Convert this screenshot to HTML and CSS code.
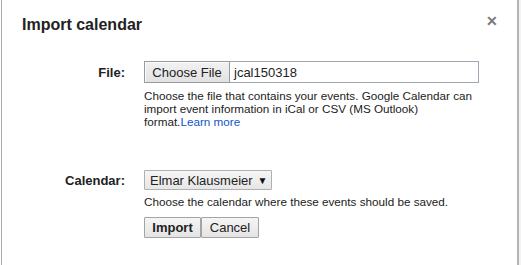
FILE: index.html
```html
<!DOCTYPE html>
<html>
<head>
<meta charset="utf-8">
<link rel="stylesheet" href="styles.css">
</head>
<body>
<div class="page">
  <div class="dialog">
    <div class="header">
      <h1 class="title">Import calendar</h1>
      <span class="close">&#x2715;</span>
    </div>
    <div class="form">
      <div class="label file-label">File:</div>
      <div class="field">
        <div class="file-input">
          <span class="choose">Choose File</span>
          <span class="filename">jcal150318</span>
        </div>
        <p class="help">Choose the file that contains your events. Google Calendar can import event information in iCal or CSV (MS Outlook) <span class="nowrap">format.<a class="link" href="#">Learn more</a></span></p>
      </div>
      <div class="label cal-label">Calendar:</div>
      <div class="field cal-field">
        <div class="select">Elmar Klausmeier <span class="arrow">&#x25BC;</span></div>
        <p class="help help2">Choose the calendar where these events should be saved.</p>
        <div class="buttons">
          <span class="btn btn-primary">Import</span>
          <span class="btn btn-cancel">Cancel</span>
        </div>
      </div>
    </div>
  </div>
  <div class="backdrop"></div>
</div>
</body>
</html>
```

FILE: styles.css
```css
* { box-sizing: border-box; }
html, body { margin: 0; padding: 0; }
body {
  width: 521px;
  height: 265px;
  overflow: hidden;
  font-family: "Liberation Sans", Arial, sans-serif;
  color: #222;
  background: #fff;
}
.page {
  display: flex;
  height: 265px;
}
.dialog {
  width: 518px;
  margin-left: 1px;
  border-left: 1px solid #a8a8a8;
  border-right: 2px solid #b4b4b4;
  background: #fff;
  height: 265px;
}
.backdrop {
  flex: 1;
  background: #f3f3f3;
}
.header {
  display: flex;
  justify-content: space-between;
  align-items: flex-start;
  padding: 15px 19px 0 20px;
  height: 61px;
}
.title {
  margin: 0;
  font-size: 16px;
  line-height: 20px;
  font-weight: bold;
  color: #222;
}
.close {
  font-size: 14px;
  font-weight: bold;
  color: #7a7a7a;
  line-height: 14px;
  margin-top: -1px;
}
.form {
  display: grid;
  grid-template-columns: 123px 1fr;
  column-gap: 19px;
}
.label {
  text-align: right;
  font-size: 13px;
  font-weight: bold;
  color: #222;
  white-space: nowrap;
}
.file-label { padding-top: 4px; }
.cal-label { padding-top: 45px; }
.file-input {
  display: flex;
  width: 335px;
  height: 22px;
  border: 1px solid #9ea8b2;
  background: #fff;
  white-space: nowrap;
}
.choose {
  display: flex;
  align-items: center;
  justify-content: center;
  font-size: 13px;
  color: #222;
  background: linear-gradient(#f2f2f2, #e2e2e2);
  box-shadow: inset 1px 1px 0 #fafafa;
  width: 86px;
  flex: none;
  margin: -1px 0 -1px -1px;
  border: 1px solid #9a9a9a;
}
.filename {
  display: flex;
  align-items: center;
  padding-left: 4px;
  font-size: 13px;
  color: #222;
}
.help {
  margin: 6px 0 0;
  font-size: 11.7px;
  line-height: 13px;
  color: #222;
  width: 332px;
}
.nowrap { white-space: nowrap; }
.link {
  color: #1155cc;
  text-decoration: none;
}
.cal-field { padding-top: 42px; }
.select {
  display: inline-flex;
  align-items: center;
  height: 20px;
  width: 128px;
  padding: 0 5px;
  font-size: 13px;
  color: #222;
  white-space: nowrap;
  border: 1px solid #b0b0b0;
  border-radius: 1px;
  background: linear-gradient(#f6f6f6, #e6e6e6);
}
.arrow {
  font-size: 10px;
  margin-left: 5px;
  color: #111;
}
.help2 {
  margin-top: 5px;
  width: auto;
  white-space: nowrap;
}
.buttons {
  display: flex;
  margin-top: 9px;
}
.btn {
  display: flex;
  align-items: center;
  justify-content: center;
  height: 21px;
  padding: 0 7px;
  font-size: 13px;
  color: #222;
  white-space: nowrap;
  border: 1px solid #a4a4a4;
  border-radius: 1px;
  background: linear-gradient(#f5f5f5, #e4e4e4);
}
.btn-primary {
  font-weight: bold;
  width: 57px;
}
.btn-cancel {
  width: 58px;
}
```
